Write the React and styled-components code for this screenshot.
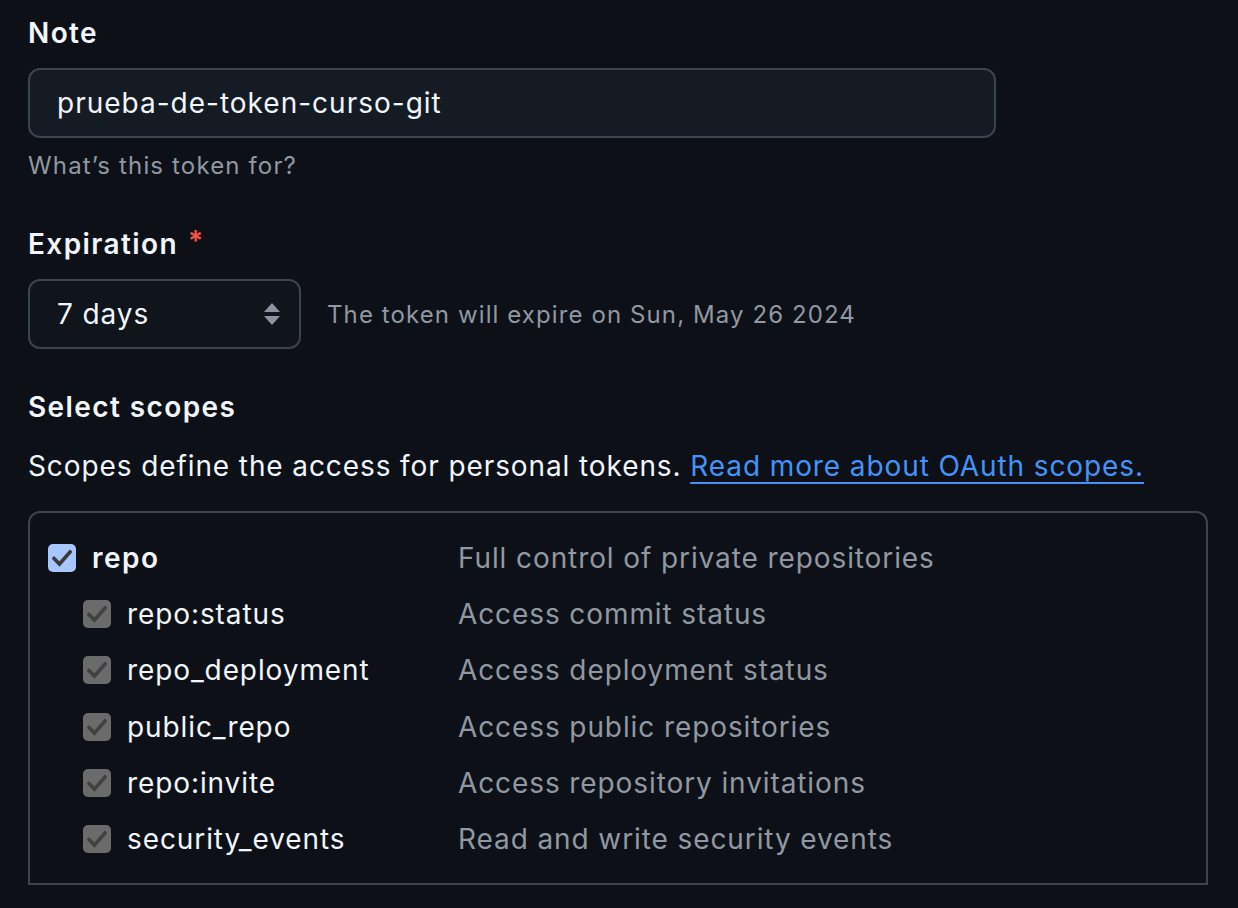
import React from "react";
import styled, { createGlobalStyle } from "styled-components";

const GlobalStyle = createGlobalStyle`
  html, body {
    margin: 0;
    padding: 0;
    background: #0d1117;
  }
  body {
    font-family: Inter, "Noto Sans", "Liberation Sans", sans-serif;
    color: #f0f6fc;
    letter-spacing: 0.9px;
    -webkit-font-smoothing: antialiased;
  }
`;

const Page = styled.div`
  padding: 13px 0 0 28px;
  width: 1180px;
  height: 895px;
  overflow: hidden;
`;

const Label = styled.div`
  font-size: 28px;
  font-weight: 600;
  letter-spacing: 1.4px;
  line-height: 40px;
  margin-top: ${(p) => p.$top || 0}px;
  display: flex;
  align-items: center;
  gap: 10px;
`;

const Required = styled.span`
  color: #f85149;
  font-size: 28px;
  line-height: 1;
  margin-top: -6px;
`;

const TextInput = styled.div`
  margin-top: 15px;
  width: 968px;
  height: 70px;
  box-sizing: border-box;
  border: 2px solid #3d444d;
  border-radius: 12px;
  background: #151b23;
  display: flex;
  align-items: center;
  padding-left: 27px;
  font-size: 28px;
  letter-spacing: 1px;
  color: #f0f6fc;
`;

const Hint = styled.div`
  margin-top: 12px;
  font-size: 24px;
  letter-spacing: 1.15px;
  line-height: 32px;
  color: #9198a1;
`;

const SelectRow = styled.div`
  margin-top: 15px;
  display: flex;
  align-items: center;
  gap: 26px;
`;

const SelectBox = styled.div`
  width: 273px;
  height: 70px;
  box-sizing: border-box;
  border: 2px solid #3d444d;
  border-radius: 12px;
  background: #10141b;
  display: flex;
  align-items: center;
  justify-content: space-between;
  padding: 0 18px 0 27px;
  font-size: 28px;
`;

const ExpireText = styled.span`
  font-size: 24px;
  letter-spacing: 1.1px;
  color: #9198a1;
`;

const Paragraph = styled.p`
  margin: 19px 0 0;
  font-size: 28px;
  line-height: 40px;
`;

const Link = styled.a`
  color: #4493f8;
  text-decoration: underline;
  text-decoration-thickness: 2px;
  text-underline-offset: 6px;
`;

const ScopeBox = styled.div`
  margin-top: 25px;
  border: 2px solid #3d444d;
  border-bottom: none;
  border-radius: 12px 12px 0 0;
  padding-top: 17px;
`;

const ScopeList = styled.div`
  padding: 0 0 16px 18px;
  border-bottom: 2px solid #3d444d;
`;

const ScopeRow = styled.div`
  display: grid;
  grid-template-columns: 410px 1fr;
  align-items: center;
  height: 56.2px;
`;

const ScopeName = styled.div`
  display: flex;
  align-items: center;
  gap: 16px;
  padding-left: ${(p) => (p.$child ? 35 : 0)}px;
  font-size: 28px;
  font-weight: ${(p) => (p.$child ? 400 : 600)};
  letter-spacing: ${(p) => (p.$child ? 0.9 : 1.5)}px;
  color: #f0f6fc;
`;

const ScopeDesc = styled.div`
  font-size: 28px;
  color: #9198a1;
`;

const Check = styled.span`
  width: 28px;
  height: 28px;
  border-radius: 5px;
  background: ${(p) => (p.$muted ? "#6b6b6b" : "#a6c8ff")};
  display: flex;
  align-items: center;
  justify-content: center;
  flex-shrink: 0;
`;

const Arrows = () => (
  <svg width="18" height="24" viewBox="0 0 18 24">
    <path d="M9 1 L17 10 L1 10 Z" fill="#8b949e" />
    <path d="M1 14 L17 14 L9 23 Z" fill="#8b949e" />
  </svg>
);

const CheckMark = ({ color }) => (
  <svg width="20" height="18" viewBox="0 0 20 18">
    <path
      d="M2 9.5 L7.5 15 L18 3"
      fill="none"
      stroke={color}
      strokeWidth="3.6"
      strokeLinecap="square"
    />
  </svg>
);

const scopes = [
  ["repo:status", "Access commit status"],
  ["repo_deployment", "Access deployment status"],
  ["public_repo", "Access public repositories"],
  ["repo:invite", "Access repository invitations"],
  ["security_events", "Read and write security events"],
];

export default function App() {
  return (
    <>
      <GlobalStyle />
      <Page>
        <Label>Note</Label>
        <TextInput>prueba-de-token-curso-git</TextInput>
        <Hint>What’s this token for?</Hint>

        <Label $top={42}>
          Expiration <Required>*</Required>
        </Label>
        <SelectRow>
          <SelectBox>
            <span>7 days</span>
            <Arrows />
          </SelectBox>
          <ExpireText>The token will expire on Sun, May 26 2024</ExpireText>
        </SelectRow>

        <Label $top={38}>Select scopes</Label>
        <Paragraph>
          Scopes define the access for personal tokens.{" "}
          <Link href="#">Read more about OAuth scopes.</Link>
        </Paragraph>

        <ScopeBox>
          <ScopeList>
            <ScopeRow>
              <ScopeName>
                <Check>
                  <CheckMark color="#3a3a3a" />
                </Check>
                repo
              </ScopeName>
              <ScopeDesc>Full control of private repositories</ScopeDesc>
            </ScopeRow>
            {scopes.map(([name, desc]) => (
              <ScopeRow key={name}>
                <ScopeName $child>
                  <Check $muted>
                    <CheckMark color="#414141" />
                  </Check>
                  {name}
                </ScopeName>
                <ScopeDesc>{desc}</ScopeDesc>
              </ScopeRow>
            ))}
          </ScopeList>
        </ScopeBox>
      </Page>
    </>
  );
}
